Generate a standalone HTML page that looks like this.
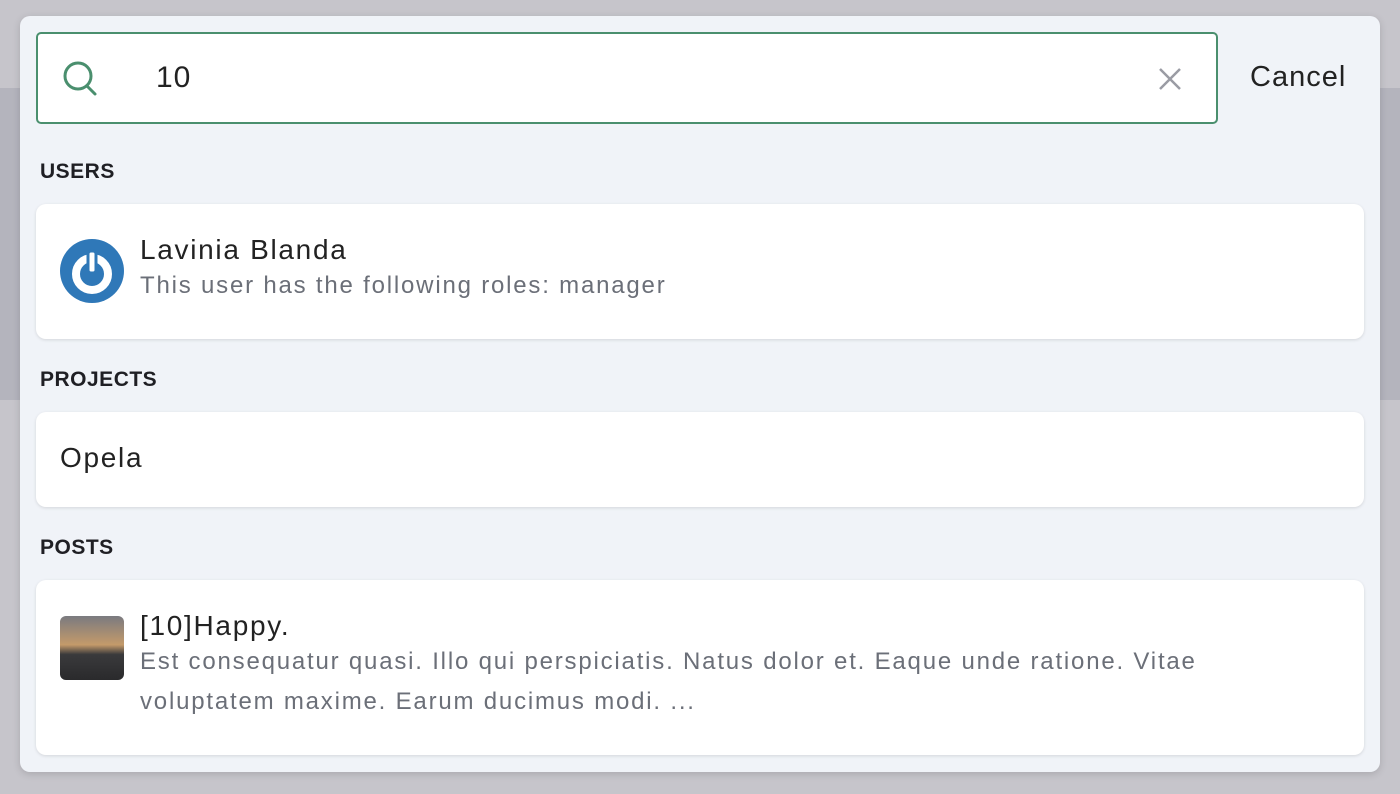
<!DOCTYPE html>
<html><head><style>
body{margin:0;width:1400px;height:794px;background:#c6c5cb;font-family:"Liberation Sans",sans-serif;position:relative;overflow:hidden}
.band{position:absolute;left:0;top:88px;width:1400px;height:312px;background:#b4b4bd}
.modal{position:absolute;left:20px;top:16px;width:1360px;height:756px;background:#f0f3f8;border-radius:10px;box-shadow:0 2px 8px rgba(0,0,0,.15);overflow:hidden}
.search{position:absolute;left:16px;top:16px;width:1178px;height:88px;border:2px solid #4a8f6e;border-radius:5px;background:#fff}
.search .q{position:absolute;left:118px;top:27px;font-size:30px;color:#222;letter-spacing:1px}
.cancel{position:absolute;left:1230px;top:45px;font-size:29px;color:#222;letter-spacing:1px}
.h{position:absolute;left:20px;font-size:21px;font-weight:bold;color:#1f1f24;letter-spacing:.5px}
.card{position:absolute;left:16px;width:1328px;background:#fff;border-radius:10px;box-shadow:0 1px 3px rgba(0,0,0,.12)}
.t{position:absolute;left:104px;font-size:28px;color:#222;letter-spacing:1.7px}
.s{position:absolute;left:104px;font-size:24px;color:#6b6f78;line-height:40px;letter-spacing:1.8px}
</style></head><body>
<div class="band"></div>
<div class="modal">
 <div class="search">
  <svg style="position:absolute;left:24px;top:26px" width="38" height="38" viewBox="0 0 38 38"><circle cx="16" cy="16" r="13" fill="none" stroke="#4a8f6e" stroke-width="3"/><line x1="25" y1="26" x2="33" y2="34" stroke="#4a8f6e" stroke-width="3" stroke-linecap="round"/></svg>
  <div class="q">10</div>
  <svg style="position:absolute;left:1120px;top:33px" width="24" height="24" viewBox="0 0 24 24"><path d="M2 2L22 22M22 2L2 22" stroke="#9a9ca4" stroke-width="2.5"/></svg>
 </div>
 <div class="cancel">Cancel</div>
 <div class="h" style="top:144px">USERS</div>
 <div class="card" style="top:188px;height:135px">
  <svg style="position:absolute;left:24px;top:35px" width="64" height="64" viewBox="0 0 64 64"><circle cx="32" cy="32" r="32" fill="#2f78b8"/><circle cx="32" cy="35" r="16" fill="none" stroke="#fff" stroke-width="8"/><rect x="28" y="12" width="8" height="22" rx="3" fill="#fff" stroke="#2f78b8" stroke-width="3"/></svg>
  <div class="t" style="top:30px">Lavinia Blanda</div>
  <div class="s" style="top:62px">This user has the following roles: manager</div>
 </div>
 <div class="h" style="top:352px">PROJECTS</div>
 <div class="card" style="top:396px;height:95px">
  <div class="t" style="left:24px;top:30px">Opela</div>
 </div>
 <div class="h" style="top:520px">POSTS</div>
 <div class="card" style="top:564px;height:175px">
  <div style="position:absolute;left:24px;top:36px;width:64px;height:64px;border-radius:6px;background:linear-gradient(#7a7a80 0%,#c49a6a 45%,#3a3a3c 60%,#2a2a2c 100%)"></div>
  <div class="t" style="top:30px">[10]Happy.</div>
  <div class="s" style="top:62px">Est consequatur quasi. Illo qui perspiciatis. Natus dolor et. Eaque unde ratione. Vitae<br>voluptatem maxime. Earum ducimus modi. ...</div>
 </div>
</div>
</body></html>
